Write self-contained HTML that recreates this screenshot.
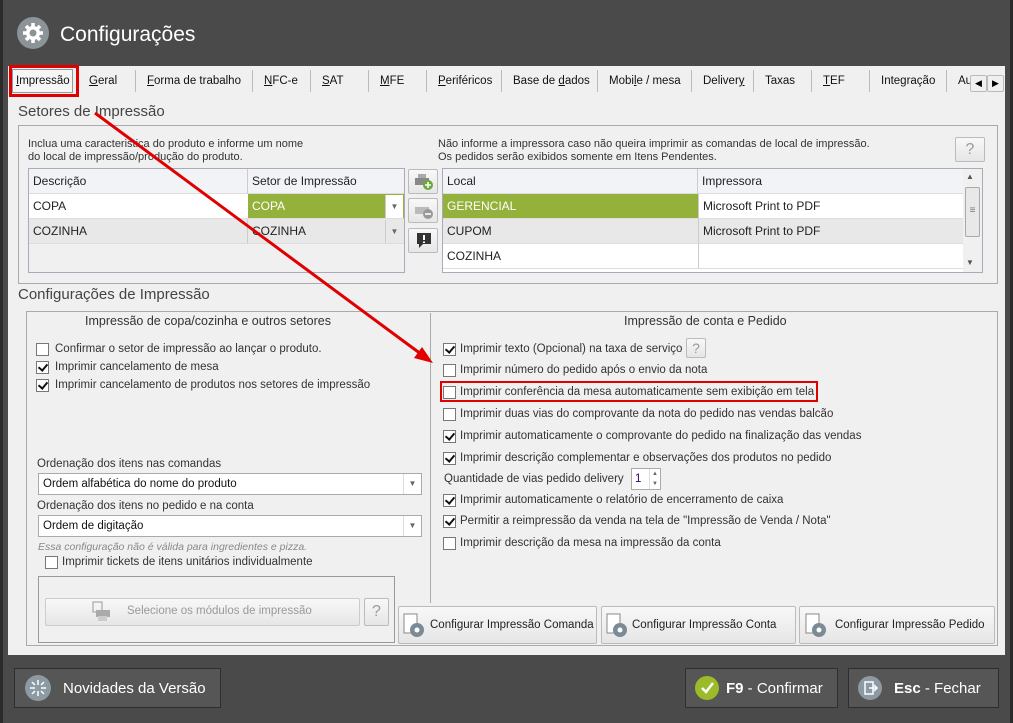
<!DOCTYPE html>
<html><head><meta charset="utf-8"><style>
*{box-sizing:border-box;margin:0;padding:0}
body{width:1013px;height:723px;overflow:hidden;background:#2a2a2a;font-family:"Liberation Sans",sans-serif;font-size:11.5px;color:#333;position:relative}
.a{position:absolute;white-space:nowrap}
.win{position:absolute;left:3px;top:0;width:1007px;height:723px;background:#4a4a4a}
.content{position:absolute;left:8px;top:66px;width:997px;height:589px;background:#f0f0f0}
.tab{position:absolute;top:75px;font-size:11.5px;color:#111}
.sep{position:absolute;top:70px;width:1px;height:22px;background:#bbb}
.grp{position:absolute;border:1px solid #aaa}
.cb{position:absolute;width:13px;height:13px;border:1px solid #777;background:#fff}
.cb.c::after{content:"";position:absolute;left:3px;top:0px;width:4px;height:7px;border:solid #111;border-width:0 2px 2px 0;transform:rotate(40deg)}
.lbl{position:absolute;white-space:nowrap;color:#333}
.cell{position:absolute;height:25px;line-height:25px;padding-left:4px;border-bottom:1px solid #ddd;font-size:12px;color:#222}
.btn{position:absolute;border:1px solid #bbb;border-radius:2px;background:linear-gradient(#f8f8f8,#e6e6e6)}
.dbtn{position:absolute;border:1px solid #2e2e2e;background:#565656;color:#fff;font-size:15px}
</style></head><body>
<div class="win">
<div class="a" style="left:14px;top:17px;width:32px;height:32px;border-radius:50%;background:#8c9499"></div>
<svg class="a" style="left:18px;top:21px" width="24" height="24" viewBox="0 0 24 24"><g fill="#fff"><circle cx="12" cy="12" r="7"/><g stroke="#fff" stroke-width="3.5"><line x1="12" y1="2" x2="12" y2="22"/><line x1="2" y1="12" x2="22" y2="12"/><line x1="5" y1="5" x2="19" y2="19"/><line x1="19" y1="5" x2="5" y2="19"/></g></g><circle cx="12" cy="12" r="3.5" fill="#8c9499"/></svg>
<div class="a" style="left:57px;top:23px;font-size:21px;color:#fff">Configurações</div>
</div>
<div class="content"></div>
<!-- tabs -->
<div class="a" style="left:12px;top:69px;width:61px;height:24px;border:1px solid #999;background:#f6f6f6"></div>
<div class="tab" style="left:16px"><u>I</u>mpressão</div>
<div class="tab" style="left:89px"><u>G</u>eral</div>
<div class="sep" style="left:135px"></div>
<div class="tab" style="left:147px"><u>F</u>orma de trabalho</div>
<div class="sep" style="left:252px"></div>
<div class="tab" style="left:264px"><u>N</u>FC-e</div>
<div class="sep" style="left:310px"></div>
<div class="tab" style="left:322px"><u>S</u>AT</div>
<div class="sep" style="left:368px"></div>
<div class="tab" style="left:380px"><u>M</u>FE</div>
<div class="sep" style="left:426px"></div>
<div class="tab" style="left:438px"><u>P</u>eriféricos</div>
<div class="sep" style="left:501px"></div>
<div class="tab" style="left:513px">Base de <u>d</u>ados</div>
<div class="sep" style="left:597px"></div>
<div class="tab" style="left:609px">Mobi<u>l</u>e / mesa</div>
<div class="sep" style="left:691px"></div>
<div class="tab" style="left:703px">Deliver<u>y</u></div>
<div class="sep" style="left:753px"></div>
<div class="tab" style="left:765px">Taxas</div>
<div class="sep" style="left:811px"></div>
<div class="tab" style="left:823px"><u>T</u>EF</div>
<div class="sep" style="left:869px"></div>
<div class="tab" style="left:881px">Integração</div>
<div class="sep" style="left:946px"></div>
<div class="tab" style="left:958px">Au</div>
<div class="btn" style="left:970px;top:75px;width:17px;height:17px;background:#f0f0f0;font-size:9px;text-align:center;line-height:15px;color:#000">◀</div>
<div class="btn" style="left:987px;top:75px;width:17px;height:17px;background:#f0f0f0;font-size:9px;text-align:center;line-height:15px;color:#000">▶</div>
<div class="a" style="left:9px;top:65px;width:70px;height:32px;border:3px solid #e00000"></div>

<div class="a" style="left:18px;top:103px;font-size:15px;color:#444">Setores de Impressão</div>
<div class="grp" style="left:18px;top:125px;width:980px;height:159px"></div>
<div class="lbl" style="left:28px;top:138px;line-height:13px;font-size:11px">Inclua uma caracteristica do produto e informe um nome<br>do local de impressão/produção do produto.</div>
<div class="lbl" style="left:438px;top:138px;line-height:13px;font-size:11px">Não informe a impressora caso não queira imprimir as comandas de local de impressão.<br>Os pedidos serão exibidos somente em Itens Pendentes.</div>
<div class="btn" style="left:955px;top:137px;width:30px;height:25px;font-size:16px;color:#999;text-align:center;line-height:23px">?</div>
<!-- left grid -->
<div class="a" style="left:28px;top:168px;width:377px;height:105px;border:1px solid #aab;background:#f0f0f0"></div>
<div class="cell" style="left:29px;top:169px;width:219px;background:#f2f3f6;border-right:1px solid #ccc">Descrição</div>
<div class="cell" style="left:248px;top:169px;width:156px;background:#f2f3f6">Setor de Impressão</div>
<div class="cell" style="left:29px;top:194px;width:219px;background:#fff">COPA</div>
<div class="cell" style="left:248px;top:194px;width:156px;background:#94b13b;color:#fff">COPA</div>
<div class="a" style="left:385px;top:195px;width:18px;height:23px;background:#fff;border-left:1px solid #ccc;font-size:8px;color:#666;text-align:center;line-height:23px">▼</div>
<div class="cell" style="left:29px;top:219px;width:219px;background:#e8e8e8;border-right:1px solid #ccc">COZINHA</div>
<div class="cell" style="left:248px;top:219px;width:156px;background:#e8e8e8">COZINHA</div>
<div class="a" style="left:385px;top:220px;width:18px;height:23px;border-left:1px solid #ccc;font-size:8px;color:#666;text-align:center;line-height:23px">▼</div>
<div class="btn" style="left:408px;top:169px;width:30px;height:25px"></div>
<svg class="a" style="left:414px;top:173px" width="20" height="18"><rect x="1" y="5" width="14" height="7" fill="#888"/><rect x="4" y="1" width="8" height="4" fill="#aaa"/><circle cx="14" cy="12" r="5" fill="#6aa83a"/><path d="M11 12h6M14 9v6" stroke="#fff" stroke-width="1.6"/></svg>
<div class="btn" style="left:408px;top:198px;width:30px;height:25px"></div>
<svg class="a" style="left:414px;top:202px" width="20" height="18"><rect x="1" y="5" width="14" height="7" fill="#bbb"/><circle cx="14" cy="12" r="5" fill="#999"/><path d="M11 12h6" stroke="#fff" stroke-width="1.6"/></svg>
<div class="btn" style="left:408px;top:228px;width:30px;height:25px"></div>
<svg class="a" style="left:415px;top:231px" width="18" height="18"><path d="M2 2h14v11H8l-4 4v-4H2z" fill="#333"/><path d="M9 4v5M9 10.5v1.5" stroke="#fff" stroke-width="2"/></svg>
<!-- right grid -->
<div class="a" style="left:442px;top:168px;width:541px;height:105px;border:1px solid #aab;background:#fff"></div>
<div class="cell" style="left:443px;top:169px;width:255px;background:#f2f3f6;border-right:1px solid #ccc">Local</div>
<div class="cell" style="left:698px;top:169px;width:265px;background:#f2f3f6">Impressora</div>
<div class="cell" style="left:443px;top:194px;width:255px;background:#94b13b;color:#fff">GERENCIAL</div>
<div class="cell" style="left:698px;top:194px;width:265px;background:#fff;border-left:1px solid #ccc">Microsoft Print to PDF</div>
<div class="cell" style="left:443px;top:219px;width:255px;background:#e8e8e8">CUPOM</div>
<div class="cell" style="left:698px;top:219px;width:265px;background:#e8e8e8;border-left:1px solid #ccc">Microsoft Print to PDF</div>
<div class="cell" style="left:443px;top:244px;width:255px;background:#fff">COZINHA</div>
<div class="cell" style="left:698px;top:244px;width:265px;background:#fff;border-left:1px solid #ccc"></div>
<div class="a" style="left:963px;top:169px;width:19px;height:103px;background:#f0f0f0"></div>
<div class="a" style="left:966px;top:172px;font-size:8px;color:#555">▲</div>
<div class="a" style="left:965px;top:187px;width:15px;height:50px;border:1px solid #aaa;border-radius:2px;background:#e8e8e8;text-align:center;line-height:46px;font-size:10px;color:#777">≡</div>
<div class="a" style="left:966px;top:258px;font-size:8px;color:#555">▼</div>

<div class="a" style="left:18px;top:286px;font-size:15px;color:#444">Configurações de Impressão</div>
<div class="grp" style="left:26px;top:311px;width:972px;height:335px"></div>
<div class="a" style="left:430px;top:313px;width:1px;height:290px;background:#aaa"></div>
<div class="lbl" style="left:85px;top:314px;font-size:12.5px">Impressão de copa/cozinha e outros setores</div>
<div class="cb" style="left:36px;top:343px"></div><div class="lbl" style="left:55px;top:343px">Confirmar o setor de impressão ao lançar o produto.</div>
<div class="cb c" style="left:36px;top:361px"></div><div class="lbl" style="left:55px;top:361px">Imprimir cancelamento de mesa</div>
<div class="cb c" style="left:36px;top:379px"></div><div class="lbl" style="left:55px;top:379px">Imprimir cancelamento de produtos nos setores de impressão</div>
<div class="lbl" style="left:37px;top:458px">Ordenação dos itens nas comandas</div>
<div class="a" style="left:38px;top:473px;width:384px;height:22px;border:1px solid #aaa;background:#fff;padding-left:4px;line-height:20px;color:#111">Ordem alfabética do nome do produto<span style="position:absolute;right:0;top:0;width:18px;height:20px;border-left:1px solid #ddd;font-size:8px;color:#666;text-align:center">▼</span></div>
<div class="lbl" style="left:37px;top:500px">Ordenação dos itens no pedido e na conta</div>
<div class="a" style="left:38px;top:515px;width:384px;height:22px;border:1px solid #aaa;background:#fff;padding-left:4px;line-height:20px;color:#111">Ordem de digitação<span style="position:absolute;right:0;top:0;width:18px;height:20px;border-left:1px solid #ddd;font-size:8px;color:#666;text-align:center">▼</span></div>
<div class="lbl" style="left:38px;top:541px;font-style:italic;font-size:10.5px;color:#888">Essa configuração não é válida para ingredientes e pizza.</div>
<div class="cb" style="left:45px;top:556px"></div><div class="lbl" style="left:62px;top:556px">Imprimir tickets de itens unitários individualmente</div>
<div class="grp" style="left:38px;top:576px;width:357px;height:67px;border-color:#999"></div>
<div class="btn" style="left:45px;top:598px;width:315px;height:28px;border-color:#ccc"></div>
<svg class="a" style="left:92px;top:601px" width="20" height="22"><rect x="1" y="1" width="9" height="10" fill="none" stroke="#999"/><rect x="4" y="9" width="14" height="7" fill="#aaa"/><rect x="6" y="15" width="9" height="5" fill="#ccc"/></svg>
<div class="lbl" style="left:127px;top:605px;color:#999">Selecione os módulos de impressão</div>
<div class="btn" style="left:364px;top:598px;width:25px;height:28px;color:#999;font-size:16px;text-align:center;line-height:26px">?</div>

<div class="lbl" style="left:624px;top:314px;font-size:12.5px">Impressão de conta e Pedido</div>
<div class="cb c" style="left:443px;top:343px"></div><div class="lbl" style="left:460px;top:343px">Imprimir texto (Opcional) na taxa de serviço</div>
<div class="btn" style="left:686px;top:338px;width:20px;height:20px;color:#999;font-size:14px;text-align:center;line-height:18px">?</div>
<div class="cb" style="left:443px;top:364px"></div><div class="lbl" style="left:460px;top:364px">Imprimir número do pedido após o envio da nota</div>
<div class="cb" style="left:443px;top:386px"></div><div class="lbl" style="left:460px;top:386px">Imprimir conferência da mesa automaticamente sem exibição em tela</div>
<div class="a" style="left:440px;top:381px;width:378px;height:21px;border:2px solid #e00000"></div>
<div class="cb" style="left:443px;top:408px"></div><div class="lbl" style="left:460px;top:408px">Imprimir duas vias do comprovante da nota do pedido nas vendas balcão</div>
<div class="cb c" style="left:443px;top:430px"></div><div class="lbl" style="left:460px;top:430px">Imprimir automaticamente o comprovante do pedido na finalização das vendas</div>
<div class="cb c" style="left:443px;top:452px"></div><div class="lbl" style="left:460px;top:452px">Imprimir descrição complementar e observações dos produtos no pedido</div>
<div class="lbl" style="left:444px;top:473px">Quantidade de vias pedido delivery</div>
<div class="a" style="left:631px;top:468px;width:30px;height:22px;border:1px solid #aaa;background:#fff;padding-left:3px;line-height:20px;color:#306">1<span style="position:absolute;right:0;top:0;width:11px;height:20px;border-left:1px solid #ddd;font-size:6px;color:#666;text-align:center;line-height:10px">▲<br>▼</span></div>
<div class="cb c" style="left:443px;top:494px"></div><div class="lbl" style="left:460px;top:494px">Imprimir automaticamente o relatório de encerramento de caixa</div>
<div class="cb c" style="left:443px;top:515px"></div><div class="lbl" style="left:460px;top:515px">Permitir a reimpressão da venda na tela de "Impressão de Venda / Nota"</div>
<div class="cb" style="left:443px;top:537px"></div><div class="lbl" style="left:460px;top:537px">Imprimir descrição da mesa na impressão da conta</div>

<div class="btn" style="left:398px;top:606px;width:199px;height:38px"></div>
<div class="btn" style="left:601px;top:606px;width:195px;height:38px"></div>
<div class="btn" style="left:799px;top:606px;width:196px;height:38px"></div>
<svg class="a" style="left:403px;top:613px" width="24" height="26"><rect x="1" y="1" width="13" height="19" fill="#fff" stroke="#888"/><circle cx="14" cy="17" r="7" fill="#7a8a96"/><circle cx="14" cy="17" r="2.5" fill="#fff"/></svg>
<svg class="a" style="left:606px;top:613px" width="24" height="26"><rect x="1" y="1" width="13" height="19" fill="#fff" stroke="#888"/><circle cx="14" cy="17" r="7" fill="#7a8a96"/><circle cx="14" cy="17" r="2.5" fill="#fff"/></svg>
<svg class="a" style="left:805px;top:613px" width="24" height="26"><rect x="1" y="1" width="13" height="19" fill="#fff" stroke="#888"/><circle cx="14" cy="17" r="7" fill="#7a8a96"/><circle cx="14" cy="17" r="2.5" fill="#fff"/></svg>
<div class="lbl" style="left:430px;top:619px;color:#222">Configurar Impressão Comanda</div>
<div class="lbl" style="left:632px;top:619px;color:#222">Configurar Impressão Conta</div>
<div class="lbl" style="left:835px;top:619px;color:#222">Configurar Impressão Pedido</div>

<!-- bottom -->
<div class="dbtn" style="left:14px;top:668px;width:207px;height:40px"></div>
<div class="a" style="left:25px;top:675px;width:26px;height:26px;border-radius:50%;background:#8c9aa3"></div>
<svg class="a" style="left:25px;top:675px" width="26" height="26"><g stroke="#fff" stroke-width="1.5"><line x1="13" y1="5" x2="13" y2="10"/><line x1="13" y1="16" x2="13" y2="21"/><line x1="5" y1="13" x2="10" y2="13"/><line x1="16" y1="13" x2="21" y2="13"/><line x1="7" y1="7" x2="10" y2="10"/><line x1="16" y1="16" x2="19" y2="19"/><line x1="19" y1="7" x2="16" y2="10"/><line x1="7" y1="19" x2="10" y2="16"/></g></svg>
<div class="a" style="left:63px;top:680px;font-size:15px;color:#fff">Novidades da Versão</div>
<div class="dbtn" style="left:685px;top:668px;width:153px;height:40px"></div>
<div class="a" style="left:695px;top:676px;width:24px;height:24px;border-radius:50%;background:#9bbb2a"></div>
<svg class="a" style="left:699px;top:680px" width="16" height="16"><path d="M3 8l4 4 7-9" stroke="#fff" stroke-width="2.5" fill="none"/></svg>
<div class="a" style="left:726px;top:680px;font-size:15px;color:#fff"><b>F9</b> - Confirmar</div>
<div class="dbtn" style="left:848px;top:668px;width:151px;height:40px"></div>
<div class="a" style="left:858px;top:676px;width:24px;height:24px;border-radius:50%;background:#8c9aa3"></div>
<svg class="a" style="left:858px;top:676px" width="24" height="24"><rect x="7" y="6" width="8" height="12" fill="none" stroke="#fff" stroke-width="1.5"/><path d="M11 12h8M16 9l3 3-3 3" stroke="#fff" stroke-width="1.5" fill="none"/></svg>
<div class="a" style="left:894px;top:680px;font-size:15px;color:#fff"><b>Esc</b> - Fechar</div>

<svg class="a" style="left:0;top:0" width="1013" height="723"><line x1="95" y1="113" x2="425" y2="357" stroke="#e00000" stroke-width="3"/><polygon points="433,363 414,358 422,347" fill="#e00000"/></svg>
</body></html>
